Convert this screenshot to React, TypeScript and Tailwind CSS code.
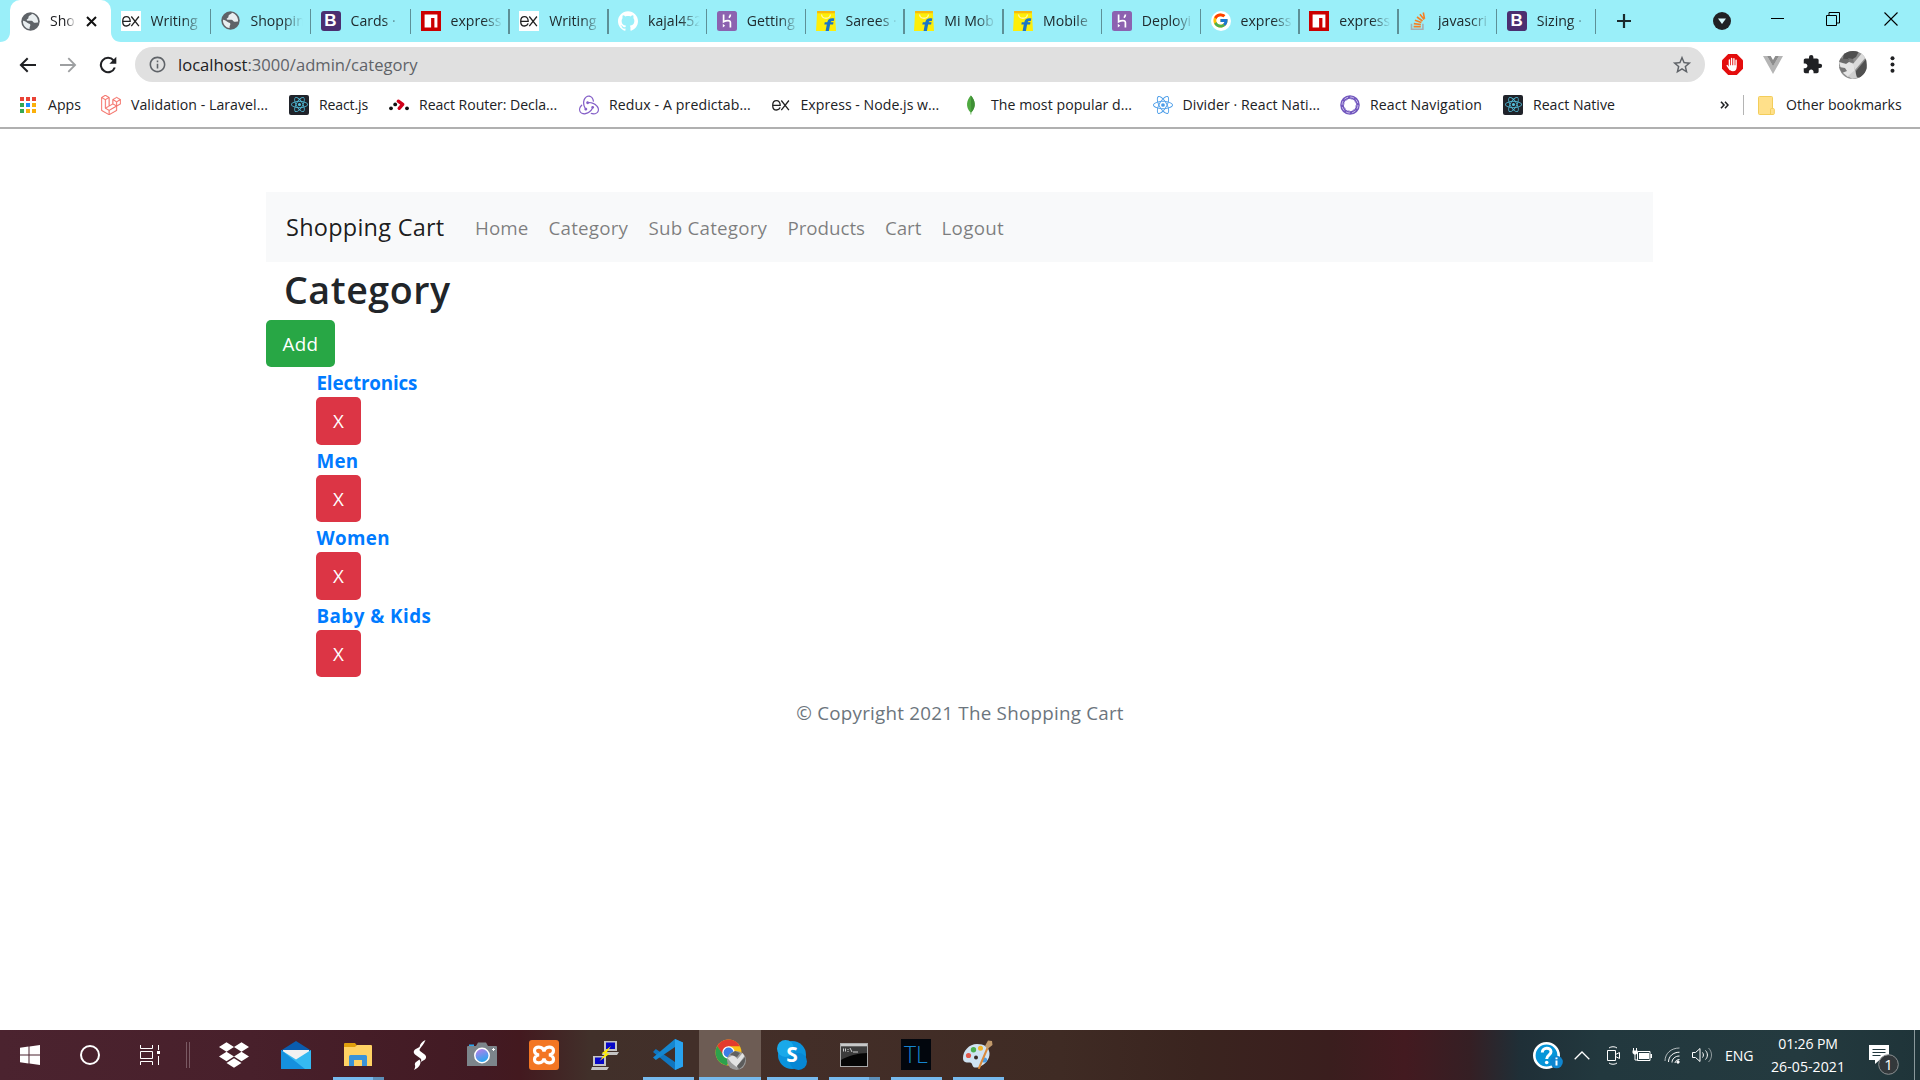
import type { ReactNode } from "react";
import { SiDropbox, SiLaravel, SiReact, SiRedux, SiGithub } from "react-icons/si";
import { FcGoogle } from "react-icons/fc";
import { MdExtension, MdStarBorder, MdInfoOutline } from "react-icons/md";

/* ---------- favicons ---------- */

const Ex = ({ boxed = false }: { boxed?: boolean }) => (
  <span className={boxed ? "flex h-5 w-5 items-center justify-center bg-white" : "flex h-5 w-5 items-center justify-center"}>
    <svg width="20" height="20" viewBox="0 0 20 20" fill="none" stroke="#222" strokeWidth="1.3">
      <path d="M2 10.3h7.200c0-3-1.500-4.600-3.700-4.600S1.700 7.600 1.700 10.400s1.500 4.600 3.900 4.600c1.800 0 3-1 3.500-2.600" />
      <path d="M10.300 5.500l7.600 9.600M17.900 5.500l-7.600 9.600" />
    </svg>
  </span>
);

const Globe = () => (
  <svg className="shrink-0" width="19" height="19" viewBox="0 0 19 19">
    <circle cx="9.500" cy="9.500" r="9.200" fill="#5f6368" />
    <path d="M11 1.700c-.5 1.200-2 1.300-3 2.300-1 1.100 0 2.400-1.500 2.900-1.200.4-1 1.700.2 1.900h3.800c1.500.1 1.500 1.600 2.700 1.900 1.300.3 2-.6 3.900-.2.200-4-2.300-7.600-6.100-8.800z" fill="#e9eef0" />
    <path d="M2 8.800c1.800.3 3.300 1.200 4.700 2.200 1.300.9 2.300.5 2.600 1.800.3 1.400-1 1.900-.7 4.300C4.500 16.600 1.600 13 2 8.800z" fill="#e9eef0" />
  </svg>
);

const Bootstrap = () => (
  <span className="flex h-5 w-5 items-center justify-center rounded-[3px] bg-[#4b2f70] font-['Liberation_Sans'] text-[17px] leading-5 font-bold text-white">B</span>
);

const Npm = () => (
  <svg width="20" height="20" viewBox="0 0 20 20">
    <path fill="#cb0000" d="M0 0h20v20H0z" />
    <path fill="#fff" d="M3.600 3.600h12.800v12.800h-3V6.900h-3.300v9.500H3.600z" />
  </svg>
);

const Heroku = () => (
  <svg width="20" height="20" viewBox="0 0 20 20">
    <rect width="20" height="20" rx="2.500" fill="#8c62b0" />
    <path d="M6.600 3.600v7.200c2-1 6.800-2.200 6.800.7v5M13.400 3.600c0 1.300-.6 2.300-1.400 3.200" fill="none" stroke="#fff" strokeWidth="1.700" />
    <path d="M5.800 12.800l2.300 1.900-2.300 1.900z" fill="#fff" />
  </svg>
);

const Flipkart = () => (
  <svg width="20" height="20" viewBox="0 0 20 20">
    <path d="M1.200 0h17.600L20 20H0z" fill="#fdee09" />
    <path d="M1.200 0h17.600l.1 2.200H1.100z" fill="#f7b90e" />
    <path d="M5.500 3.500c.8 5 8.200 5 9 0" fill="none" stroke="#fff8b0" strokeWidth="1.300" />
    <path d="M18.300 7.600c-4-.9-6.400.5-7 3.700H8.800l-.5 2.200h2.500L9.600 20h3.300l1.200-6.500h3l.4-2.200h-2.900c.3-1.200 1.500-1.500 3.200-1.200z" fill="#1b74c8" />
  </svg>
);

const Google = () => (
  <span className="flex h-5 w-5 items-center justify-center rounded-full bg-white"><FcGoogle className="h-[17px] w-[17px]" /></span>
);

const StackOverflow = () => (
  <svg width="20" height="20" viewBox="0 0 20 20" fill="none" strokeWidth="1.600">
    <path d="M3.500 12.800v5.400h11.400v-5.400" stroke="#a9adb0" />
    <path d="M5.600 15.600h7.200M5.800 12.600l7.100.9M6.900 9.300l6.500 2.300M9 6l5.500 4M11.900 3.200l4.200 5.300M15.300 1.500l1.200 6.300" stroke="#f58025" />
  </svg>
);

const ReactDark = () => (
  <span className="flex h-5 w-5 items-center justify-center rounded-[2px] bg-[#20232a]"><SiReact className="h-[17px] w-[17px] text-[#53c1de]" /></span>
);

const AppsGrid = () => (
  <span className="grid grid-cols-3 gap-[2px]">
    {["bg-[#ea4335]", "bg-[#ea4335]", "bg-[#ea4335]", "bg-[#34a853]", "bg-[#1a8cff]", "bg-[#fbb00b]", "bg-[#34a853]", "bg-[#fbb00b]", "bg-[#fbb00b]"].map((c, i) => (
      <span key={i} className={`h-1 w-1 ${c}`} />
    ))}
  </span>
);

const Router = () => (
  <svg width="20" height="20" viewBox="0 0 20 20">
    <g fill="#111"><circle cx="2" cy="13.300" r="1.900" /><circle cx="6.200" cy="9.400" r="1.900" /><circle cx="18" cy="13.300" r="1.900" /></g>
    <path d="M9.300 6.200l4.400 3.200-3.500 3.900" fill="none" stroke="#d0021b" strokeWidth="3.400" strokeLinecap="round" strokeLinejoin="round" />
  </svg>
);

const Mongo = () => (
  <svg width="20" height="20" viewBox="0 0 20 20">
    <path d="M9.800.4C5.800 4.800 4 11.500 9.500 17.400v2.200h.8v-2.200C15.800 11.500 14 4.800 9.800.4z" fill="#4faa41" />
    <path d="M9.900.4c4.100 4.400 5.900 11.100.4 17z" fill="#3f8f36" />
  </svg>
);

const Navigation = () => (
  <svg width="20" height="20" viewBox="0 0 20 20" fill="none">
    <circle cx="10" cy="10" r="8" stroke="#7257bd" strokeWidth="3.600" />
    <circle cx="10" cy="10" r="8" stroke="#cfc4ee" strokeWidth=".9" strokeDasharray="4 2.280" />
    <circle cx="10" cy="10" r="6" stroke="#a898da" strokeWidth="1" strokeDasharray="2 2.700" />
  </svg>
);

/* ---------- tab strip ---------- */

const WIDE = "w-[100px]";
const NARROW = "w-[98.75px]";

const tabs: { icon: ReactNode; title: string; width: string }[] = [
  { icon: <Ex boxed />, title: "Writing", width: WIDE },
  { icon: <Globe />, title: "Shoppin", width: WIDE },
  { icon: <Bootstrap />, title: "Cards ·", width: WIDE },
  { icon: <Npm />, title: "express", width: NARROW },
  { icon: <Ex boxed />, title: "Writing", width: NARROW },
  { icon: <SiGithub className="h-5 w-5 text-white" />, title: "kajal452", width: NARROW },
  { icon: <Heroku />, title: "Getting", width: NARROW },
  { icon: <Flipkart />, title: "Sarees ·", width: NARROW },
  { icon: <Flipkart />, title: "Mi Mob", width: NARROW },
  { icon: <Flipkart />, title: "Mobile", width: NARROW },
  { icon: <Heroku />, title: "Deployi", width: NARROW },
  { icon: <Google />, title: "express", width: NARROW },
  { icon: <Npm />, title: "express", width: NARROW },
  { icon: <StackOverflow />, title: "javascri", width: NARROW },
  { icon: <Bootstrap />, title: "Sizing ·", width: NARROW },
];

function TabStrip() {
  return (
    <div className="flex h-[42px] bg-[#9aeff9] text-[14.1px]">
      <div className="relative ml-[10px] flex w-[101px] items-center rounded-t-[10px] bg-white pl-[11px]">
        <svg className="absolute bottom-0 -left-[10px]" width="10" height="10"><path d="M10 0v10H0c6 0 10-4 10-10z" fill="#fff" /></svg>
        <svg className="absolute -right-[10px] bottom-0" width="10" height="10"><path d="M0 0v10h10C4 10 0 6 0 0z" fill="#fff" /></svg>
        <Globe />
        <span className="ml-[10px] w-[26px] whitespace-nowrap text-[#202124] [mask-image:linear-gradient(to_right,#000_60%,transparent)]">Sho</span>
        <svg className="ml-[10px]" width="11" height="11" viewBox="0 0 11 11"><path d="M1 1l9 9M10 1l-9 9" stroke="#111" strokeWidth="2" /></svg>
      </div>
      <div className="flex">
        {tabs.map((t, i) => (
          <div key={i} className={`flex items-center justify-between ${t.width}`}>
            <div className="flex items-center pl-[9.5px]">
              <span className="flex w-5 justify-center">{t.icon}</span>
              <span className="ml-[10px] w-[52px] whitespace-nowrap text-[#202b2e] [mask-image:linear-gradient(to_right,#000_62%,transparent)]">{t.title}</span>
            </div>
            <span className="h-[25px] w-[1.5px] bg-[#5d9097]" />
          </div>
        ))}
      </div>
      <div className="flex flex-1 items-center">
        <svg className="ml-[20px]" width="16" height="16"><path d="M8 1v14M1 8h14" stroke="#1b2a2d" strokeWidth="2.200" /></svg>
        <svg className="ml-[81px]" width="18" height="18"><circle cx="9" cy="9" r="9" fill="#202124" /><path d="M5 6.500h8l-4 5.500z" fill="#d8f8fc" /></svg>
        <svg className="mb-2 ml-[39px]" width="15" height="15"><path d="M1 8.500h13" stroke="#000" /></svg>
        <svg className="mb-[5px] ml-[41px]" width="14" height="14" fill="none" stroke="#000"><path d="M.5 3.500h10v10H.5zM3 3V.5h10.500V11H11" /></svg>
        <svg className="mb-[5px] ml-[44px]" width="14" height="14"><path d="M.5.5l13 13M13.500.5l-13 13" stroke="#000" strokeWidth="1.100" /></svg>
      </div>
    </div>
  );
}

/* ---------- address bar ---------- */

function AddressBar() {
  return (
    <div className="flex h-[45px] items-center bg-white">
      <svg className="ml-[19px]" width="18" height="16" fill="none" stroke="#202124" strokeWidth="2"><path d="M17 8H2M8.700 1.200L1.900 8l6.800 6.800" /></svg>
      <svg className="ml-[22px]" width="18" height="16" fill="none" stroke="#9d9fa1" strokeWidth="1.800"><path d="M1 8h15M9.300 1.200L16.100 8l-6.800 6.800" /></svg>
      <svg className="ml-[22px]" width="18" height="18" fill="none" stroke="#202124" strokeWidth="2.100"><path d="M15.800 11.500A7.200 7.200 0 1 1 14.600 4.400" /><path d="M17.300.8v6.900h-6.900z" fill="#202124" stroke="none" /></svg>
      <div className="ml-[18px] flex h-[35px] w-[1570px] items-center rounded-full bg-[#e0e0e0]">
        <MdInfoOutline className="ml-[13px] h-[19px] w-[19px] text-[#5f6368]" />
        <span className="mt-[2px] ml-[11px] text-[16.600px] text-[#5f6368]"><span className="text-[#202124]">localhost</span>:3000/admin/category</span>
        <MdStarBorder className="mr-[12px] ml-auto h-[22px] w-[22px] text-[#5f6368]" />
      </div>
      <svg className="ml-[17px]" width="21" height="21" viewBox="0 0 21 21">
        <path d="M6.200 0h8.600L21 6.200v8.600L14.800 21H6.200L0 14.800V6.200z" fill="#e40d0d" />
        <path d="M7.400 6v6M9.600 4.500v7M11.900 4.700v7M14.100 6.200v7M5.200 11.600l2.800 3.900M7.600 12h6.300v1.500c0 1.900-1.200 3-3 3-1.700 0-2.900-1-3.300-2.800z" stroke="#fff" strokeWidth="1.400" strokeLinecap="round" fill="#fff" />
      </svg>
      <svg className="ml-[20px]" width="20" height="18" viewBox="0 0 20 18"><path d="M0 0h4l6 10 6-10h4L10 18z" fill="#b5b5b5" /><path d="M4 0h3.700L10 4l2.300-4H16l-6 10.300z" fill="#8c8c8c" /></svg>
      <MdExtension className="ml-[19px] h-[21px] w-[21px] text-[#202124]" />
      <svg className="ml-[16px]" width="28" height="28" viewBox="0 0 28 28">
        <defs><clipPath id="av"><circle cx="14" cy="14" r="14" /></clipPath></defs>
        <g clipPath="url(#av)">
          <path fill="#8f8f8f" d="M0 0h28v28H0z" />
          <path fill="#4f4f4f" d="M5 0h15l-3 6-5 3-8-1z" />
          <path fill="#6b6b6b" d="M0 7l7 1 4 2-3 3-8-2z" />
          <path fill="#e4e4e4" d="M0 11l7 2 3-2 5 2 1 7-7 6-6-5z" />
          <path fill="#777" d="M0 16l6 1 2 3-5 2zM9 7l5 1 1 4-4-1z" />
          <path fill="#dadada" d="M14 13L23 2l4 4-11 13z" />
          <path fill="#505050" d="M17 20L27 8l1 12-7 7-5-2z" />
          <path fill="#cfcfcf" d="M9 25l7-6 2 8-5 1z" />
        </g>
      </svg>
      <svg className="ml-[23px]" width="5" height="17" fill="#202124"><circle cx="2.500" cy="2.300" r="2" /><circle cx="2.500" cy="8.500" r="2" /><circle cx="2.500" cy="14.700" r="2" /></svg>
    </div>
  );
}

/* ---------- bookmarks bar ---------- */

const bookmarks: { icon: ReactNode; label: string; box: string; text?: string }[] = [
  { icon: <SiLaravel className="h-5 w-5 stroke-[#f4685e] stroke-[0.4] text-[#f4685e]" />, label: "Validation - Laravel...", box: "w-[188px]", text: "tracking-[0.05px]" },
  { icon: <ReactDark />, label: "React.js", box: "w-[100px]", text: "tracking-[-0.15px]" },
  { icon: <Router />, label: "React Router: Decla...", box: "w-[190px]", text: "tracking-[-0.05px]" },
  { icon: <SiRedux className="h-5 w-5 text-[#8560c8]" />, label: "Redux - A predictab...", box: "w-[191.500px]", text: "tracking-[0.11px]" },
  { icon: <Ex />, label: "Express - Node.js w...", box: "w-[190.500px]", text: "tracking-[0.03px]" },
  { icon: <Mongo />, label: "The most popular d...", box: "w-[191.500px]", text: "tracking-[0.06px]" },
  { icon: <SiReact className="h-5 w-5 text-[#4a9ce8]" />, label: "Divider · React Nati...", box: "w-[187.500px]", text: "tracking-[0.08px]" },
  { icon: <Navigation />, label: "React Navigation", box: "w-[163px]", text: "tracking-[0.12px]" },
  { icon: <ReactDark />, label: "React Native", box: "w-[120px]" },
];

function BookmarksBar() {
  return (
    <div className="flex h-[42px] items-center border-b-2 border-[#b0b0b0] bg-white pb-[4px] text-[14.1px] text-[#202124]">
      <div className="ml-5 flex w-[81px] items-center gap-[12px]"><AppsGrid />Apps</div>
      {bookmarks.map((b) => (
        <div key={b.label} className={`flex shrink-0 items-center gap-[10px] whitespace-nowrap ${b.box}`}>
          <span className="flex w-5 justify-center">{b.icon}</span>
          <span className={b.text}>{b.label}</span>
        </div>
      ))}
      <svg className="ml-[97px]" width="9" height="8" fill="none" stroke="#202124" strokeWidth="1.600"><path d="M1 .8L4 4 1 7.200M5 .8L8 4 5 7.200" /></svg>
      <span className="ml-[14px] h-5 w-px bg-[#b4b4b4]" />
      <svg className="ml-[14px]" width="17" height="19"><path d="M1.500.5h12a1 1 0 0 1 1 1v11h1a1 1 0 0 1 .8 1v4a1 1 0 0 1-1 1H1.500a1 1 0 0 1-1-1v-16a1 1 0 0 1 1-1z" fill="#ffe08a" stroke="#f3cd5a" /><path d="M12.500 18v-4.500a1 1 0 0 1 1-1h1" fill="none" stroke="#f3cd5a" /></svg>
      <span className="ml-[11px] whitespace-nowrap">Other bookmarks</span>
    </div>
  );
}

/* ---------- shop page ---------- */

const categories = [
  { name: "Electronics", text: "tracking-[-0.15px]" },
  { name: "Men", text: "tracking-[0.2px]" },
  { name: "Women", text: "tracking-[0.35px]" },
  { name: "Baby & Kids", text: "tracking-[0.45px]" },
];

function ShopPage() {
  return (
    <main className="flex-1 bg-white pt-[63px] text-[18.800px] text-[#212529]">
      <div className="ml-[266px] w-[1387px]">
        <nav className="flex h-[70px] items-center bg-[#f8f9fa] pt-[2px] pl-5 text-black/50">
          <span className="w-[189px] text-[23.500px] tracking-[0.25px] text-black/90">Shopping Cart</span>
          <span className="w-[73.500px] tracking-[0.1px]">Home</span>
          <span className="w-[100px] tracking-[0.2px]">Category</span>
          <span className="w-[139px] tracking-[0.2px]">Sub Category</span>
          <span className="w-[97.500px] tracking-[-0.05px]">Products</span>
          <span className="w-[56.500px] tracking-[-0.1px]">Cart</span>
          <span className="tracking-[0.3px]">Logout</span>
        </nav>
        <h1 className="mb-[7px] pt-[4px] pl-[18px] text-[37.600px] leading-[47px] font-semibold tracking-[0.550px]">Category</h1>
        <button className="block h-[47px] w-[69px] rounded-[5px] bg-[#28a745] pt-px tracking-[0.3px] text-white">Add</button>
        <ul className="ml-[50px]">
          {categories.map((c) => (
            <li key={c.name} className="h-[77.500px]">
              <a className={`block h-[30px] pl-[0.5px] leading-[33px] font-bold text-[#007bff] ${c.text}`}>{c.name}</a>
              <button className="block h-[47.500px] w-[45px] rounded-[5px] bg-[#dc3545] pt-px text-white">X</button>
            </li>
          ))}
        </ul>
        <p className="mt-[21px] pl-px text-center leading-[30px] tracking-[0.240px] text-[#6c757d]">© Copyright 2021 The Shopping Cart</p>
      </div>
    </main>
  );
}

/* ---------- taskbar ---------- */

const Mail = () => (
  <svg width="30" height="28" viewBox="0 0 30 28">
    <path d="M0 9.500L15 0l15 9.500V14H0z" fill="#0a5cae" />
    <path d="M2 9h26v12H2z" fill="#f1f1f1" />
    <path d="M0 9l15 9.500L30 9v19H0z" fill="#35b9f1" />
    <path d="M0 9l24 19H0z" fill="#1590dd" />
  </svg>
);

const Explorer = () => (
  <svg width="28" height="24" viewBox="0 0 28 24">
    <path d="M0 1a1 1 0 0 1 1-1h10l2 2.500V6H0z" fill="#e09f0c" />
    <path d="M0 4h11l2-2h14a1 1 0 0 1 1 1v20H0z" fill="#ffd264" />
    <path d="M5 23V13.500a1.500 1.500 0 0 1 1.500-1.500h15a1.500 1.500 0 0 1 1.500 1.500V23h-5v-6H10v6z" fill="#3a93d8" />
  </svg>
);

const Bolt = () => (
  <svg width="14" height="30" viewBox="0 0 14 30" fill="#fff">
    <path d="M12.500 0C9 1.500 7 4 6.500 7L2 9.500C.3 11 .3 13 2 14.500l5.500 4c1 .9 1 2 .2 3.500l4.300-2.500c1.500-1.500 1.500-3.200 0-4.700L7 11c-.8-.9-.4-1.800.3-2.700 1.300-1.800 3.700-4 5.200-8.300z" />
    <path d="M6.500 19.500L3 22c-1.200 1.100-1.400 2.500-.9 3.500.3 1.200-.2 2.700-1.100 4.500 3.500-1.500 6.500-4.500 6.500-8z" />
  </svg>
);

const Camera = () => (
  <svg width="30" height="25" viewBox="0 0 30 25">
    <defs><linearGradient id="lens" x1="0" y1="0" x2=".4" y2="1"><stop offset="0" stopColor="#c879e8" /><stop offset="1" stopColor="#29a7f0" /></linearGradient></defs>
    <path d="M2 4V2.500h5V4z" fill="#29a7f0" />
    <path d="M0 5a1 1 0 0 1 1-1h8l2-3.500h8L21 4h8a1 1 0 0 1 1 1v19H0z" fill="#7c858b" />
    <circle cx="15" cy="13.500" r="7.200" fill="url(#lens)" stroke="#fff" strokeWidth="1.500" />
    <path d="M26.500 6v3M25 7.500h3" stroke="#fff" />
  </svg>
);

const Xampp = () => (
  <span className="flex h-[30px] w-[30px] items-center justify-center rounded-[3px] bg-[#f37623]">
    <svg width="24" height="20" viewBox="0 0 24 20" fill="none" stroke="#fff" strokeWidth="3.200" strokeLinecap="round">
      <path d="M12 6.500C11 1 2.500.8 2.500 5.500c0 2.500 1.800 4 4.500 4.500-2.700.4-4.500 2-4.500 4.500 0 4.700 8.500 4.500 9.500-1 1 5.500 9.500 5.700 9.500 1 0-2.500-1.800-4.100-4.500-4.500 2.700-.5 4.500-2 4.500-4.500 0-4.700-8.500-4.500-9.500 1z" />
    </svg>
  </span>
);

const Putty = () => (
  <svg width="30" height="30" viewBox="0 0 30 30">
    <path d="M13 1h13v10H13zM12 12h16l-2 3H11z" fill="#c4c4c4" /><path d="M15 2.500h9v6.500h-9z" fill="#0707c8" />
    <path d="M2 16h13v10H2zM1 27h17l-2 3H0z" fill="#c4c4c4" /><path d="M4 17.500h9V24H4z" fill="#0707c8" />
    <path d="M20 6L10.500 13.500h4L8.500 21 19 13.500h-4z" fill="#ffef00" />
  </svg>
);

const VsCode = () => (
  <svg width="30" height="31" viewBox="0 0 30 31">
    <path d="M22 0l8 3.500v24L22 31 0 13l2.800-3L22 23z" fill="#1076bf" />
    <path d="M22 0v8L2.800 21 0 18.500z" fill="#1587d0" />
    <path d="M22 0l8 3.500v24L22 31z" fill="#29a3ef" />
  </svg>
);

const Chrome = () => (
  <svg width="31" height="31" viewBox="0 0 31 31">
    <circle cx="13.500" cy="13.500" r="13" fill="#fbc116" />
    <path d="M2.200 7A13 13 0 0 1 25 7.300H13.500L8 16.800z" fill="#e33b2e" />
    <path d="M2.200 7a13 13 0 0 0 9.600 19.400l5.700-9.700-8.500.5z" fill="#2da14c" />
    <circle cx="13.500" cy="13.500" r="6.200" fill="#fff" /><circle cx="13.500" cy="13.500" r="4.900" fill="#3c7de6" />
    <circle cx="21.500" cy="21.500" r="9.500" fill="#9b9b9b" />
    <path d="M12.500 19l6-3 4 4 5-6 2 3-8 11-5-4z" fill="#e2e2e2" /><path d="M22 27l8-9c1 5-2 10-6 12z" fill="#5c5c5c" /><path d="M15 15.500l5-3.500 5 2-3 4z" fill="#606060" />
  </svg>
);

const Skype = () => (
  <span className="relative flex h-[28px] w-[28px] items-center justify-center rounded-full bg-[#0a93dd]">
    <span className="absolute -top-px -left-px h-[17px] w-[17px] rounded-full bg-[#19a9ea]" />
    <span className="absolute -right-px -bottom-px h-[17px] w-[17px] rounded-full bg-[#0787d4]" />
    <span className="relative font-['Open_Sans'] text-[21px] leading-none font-bold text-white">S</span>
  </span>
);

const Cmd = () => (
  <svg width="28" height="24" viewBox="0 0 28 24">
    <rect x=".5" y=".5" width="27" height="23" fill="#050505" stroke="#a9a9a9" />
    <path d="M1 1h26v2.500H1z" fill="#c8c8c8" /><path d="M1 4h26v6C18 10 8 13 1 17z" fill="#3c3c3c" />
    <path d="M3.500 5.500v3M5.500 5.500v3M8 6v1M8 8v1M10 5l2 4M13 9h5" stroke="#ddd" strokeWidth=".9" />
  </svg>
);

const Tl = () => (
  <span className="flex h-[31px] w-[30px] items-center justify-center bg-[#02060d] font-['Open_Sans'] text-[23px] leading-none font-light text-[#1685cf]">TL</span>
);

const Paint = () => (
  <svg width="30" height="30" viewBox="0 0 30 30">
    <path d="M14 4C6 4 0 11 0 18c0 4 3 5 6 4.500 2.500-.5 3 1 3.500 3C10.500 28 13 28 16 27c6-2 11-8 10.500-14C26 7 21 4 14 4z" fill="#cfe3f2" />
    <circle cx="5.500" cy="15.500" r="2.600" fill="#e0574a" /><circle cx="10.500" cy="9.800" r="2.700" fill="#4caf50" /><circle cx="17.500" cy="8.300" r="2.500" fill="#f0b429" /><circle cx="21.500" cy="20" r="2.600" fill="#4b9be0" /><circle cx="13" cy="17.500" r="2" fill="#3a2b27" />
    <path d="M24.500 8L16 28" stroke="#d98a3d" strokeWidth="2" strokeLinecap="round" />
    <path d="M22 6l3-5.500L29 1l.5 4-5 4z" fill="#c19a6b" />
  </svg>
);

type Mark = "none" | "one" | "many" | "active";

const apps: { icon: ReactNode; mark: Mark }[] = [
  { icon: <SiDropbox className="h-[30px] w-[30px] text-white" />, mark: "none" },
  { icon: <Mail />, mark: "none" },
  { icon: <Explorer />, mark: "many" },
  { icon: <Bolt />, mark: "none" },
  { icon: <Camera />, mark: "none" },
  { icon: <Xampp />, mark: "none" },
  { icon: <Putty />, mark: "none" },
  { icon: <VsCode />, mark: "one" },
  { icon: <Chrome />, mark: "active" },
  { icon: <Skype />, mark: "one" },
  { icon: <Cmd />, mark: "many" },
  { icon: <Tl />, mark: "one" },
  { icon: <Paint />, mark: "one" },
];

function TaskButton({ icon, mark }: { icon: ReactNode; mark: Mark }) {
  return (
    <div className={mark === "active" ? "flex w-[62px] flex-col items-center bg-[#6d5c54]" : "flex w-[62px] flex-col items-center"}>
      <div className="flex flex-1 items-center pt-[2px]">{icon}</div>
      {mark === "none" && <div className="h-[3px]" />}
      {mark === "one" && <div className="h-[3px] w-[51px] bg-[#76b9ed]" />}
      {mark === "active" && <div className="h-[3px] w-full bg-[#76b9ed]" />}
      {mark === "many" && <div className="flex h-[3px] w-[51px]"><span className="w-10 bg-[#76b9ed]" /><span className="flex-1 bg-[#5d8fb8]" /></div>}
    </div>
  );
}

function Taskbar() {
  return (
    <footer className="flex h-[50px] bg-[linear-gradient(to_right,#4b232f_0px,#48202b_250px,#421a23_480px,#43191f_520px,#41302a_590px,#432e28_800px,#3f2b24_1060px,#3a241f_1200px,#3a1e1e_1330px,#431a20_1405px,#351f24_1470px,#1f2f37_1520px,#22383e_1600px,#243a3f_1800px,#1f3439_1920px)] text-white">
      <div className="flex w-[60px] items-center justify-center">
        <svg width="20" height="20" fill="#fff"><path d="M0 2.700L8.500 1.500v8H0zM9.500 1.400L20 0v9.500H9.500zM0 10.500h8.500v8L0 17.300zM9.500 10.500H20V20L9.500 18.600z" /></svg>
      </div>
      <div className="flex w-[60px] items-center justify-center"><span className="h-[20px] w-[20px] rounded-full border-[2.500px] border-white" /></div>
      <div className="flex w-[60px] items-center justify-center">
        <svg width="20" height="20" fill="none" stroke="#fff"><path d="M.5 0v3.500h12V0M.5 6.500h12v7H.5zM.5 20v-3.500h12V20M18.500 0v5M18.500 11v9" /><path d="M17 6h3v3h-3z" fill="#fff" stroke="none" /></svg>
      </div>
      <div className="flex w-[23px] items-center gap-[2px] pl-[6px]"><span className="h-[26px] w-px bg-[#7a5a63]" /><span className="h-[26px] w-px bg-[#7a5a63]" /></div>
      {apps.map((a, i) => <TaskButton key={i} icon={a.icon} mark={a.mark} />)}
      <div className="ml-auto flex w-[387px] items-center text-[14.1px]">
        <svg width="30" height="28" viewBox="0 0 30 28" className="mt-px shrink-0">
          <circle cx="13.500" cy="13.500" r="12.200" fill="#0795d8" stroke="#fff" strokeWidth="2.600" />
          <path d="M9.300 10.500c0-5.500 8.700-5.500 8.700-.8 0 3.600-4.300 3.400-4.300 7.300" fill="none" stroke="#fff" strokeWidth="3" /><circle cx="13.700" cy="20.500" r="1.800" fill="#fff" />
          <circle cx="23.500" cy="20" r="6.300" fill="#0f86d0" /><path d="M23.500 18.500v5M23.500 15.500v1.800" stroke="#fff" strokeWidth="2" />
        </svg>
        <svg className="ml-[11px] shrink-0" width="16" height="9"><path d="M.7 8.300L8 1l7.300 7.300" fill="none" stroke="#fff" strokeWidth="1.300" /></svg>
        <svg className="ml-[16px] shrink-0" width="15" height="19" fill="none" stroke="#fff"><path d="M1.500 4.500h8v10h-8zM9.500 8.500l4-2v6l-4-2M3 2c2-1.700 6-1.700 8 0M3 17c2 1.700 6 1.700 8 0" /></svg>
        <svg className="ml-[11px] shrink-0" width="20" height="14"><path d="M1.500 0v3M4.500 0v3M3 6v6h3" stroke="#fff" fill="none" /><path d="M.5 2.500h5v2.500l-1.500 1.500h-2L.5 5z" fill="#fff" /><path d="M5.500 3.500h12.500v9H5.500z" stroke="#fff" fill="none" /><path d="M7 5h10v6H7zM18.500 6h1.500v4h-1.500z" fill="#fff" /></svg>
        <svg className="ml-[12px] shrink-0" width="17" height="17" fill="none" stroke="#fff"><g opacity=".65"><path d="M1 14C1 6.500 7 1 15.500 1" /></g><path d="M4.500 15C4.500 9.500 9 5.200 15.500 5.200M8 15.500c0-3.500 3-6.500 7.500-6.500M11 16c0-2 2-3.500 4.500-3.500" /><circle cx="14" cy="15" r="1.200" fill="#fff" /></svg>
        <svg className="ml-[11px] shrink-0" width="21" height="18" fill="none" stroke="#fff"><path d="M.5 6.500h3l4.500-4v13l-4.500-4h-3zM10.500 6.500c1.200 1.500 1.200 3.500 0 5M13.500 4.500c2.500 2.500 2.500 6.500 0 9" /><path d="M16.500 2c4 4 4 10 0 14" opacity=".5" /></svg>
        <span className="mt-px ml-[12px] w-[30px] tracking-[-0.1px]">ENG</span>
        <div className="ml-[15px] w-[76px] text-center leading-[23px]"><div className="tracking-[-0.15px]">01:26 PM</div><div className="tracking-[0.05px]">26-05-2021</div></div>
        <svg className="mt-[9px] ml-[23px] shrink-0" width="31" height="31" viewBox="0 0 31 31">
          <path d="M0 1h20v15h-9.500L6 20v-4H0z" fill="#fff" /><path d="M3.500 5.500h13M3.500 8.500h13M3.500 11.500h8" stroke="#22383e" />
          <circle cx="19.500" cy="20.500" r="9.800" fill="#33383b" stroke="#8b9092" />
          <text x="19.500" y="26" textAnchor="middle" fontFamily="Open Sans" fontSize="15" fill="#fff">1</text>
        </svg>
        <span className="ml-[14px] h-full w-px bg-[#8a989b]" />
      </div>
    </footer>
  );
}

export default function App() {
  return (
    <div className="flex h-[1080px] w-[1920px] flex-col overflow-hidden bg-white font-['Open_Sans',sans-serif]">
      <TabStrip />
      <AddressBar />
      <BookmarksBar />
      <ShopPage />
      <Taskbar />
    </div>
  );
}
